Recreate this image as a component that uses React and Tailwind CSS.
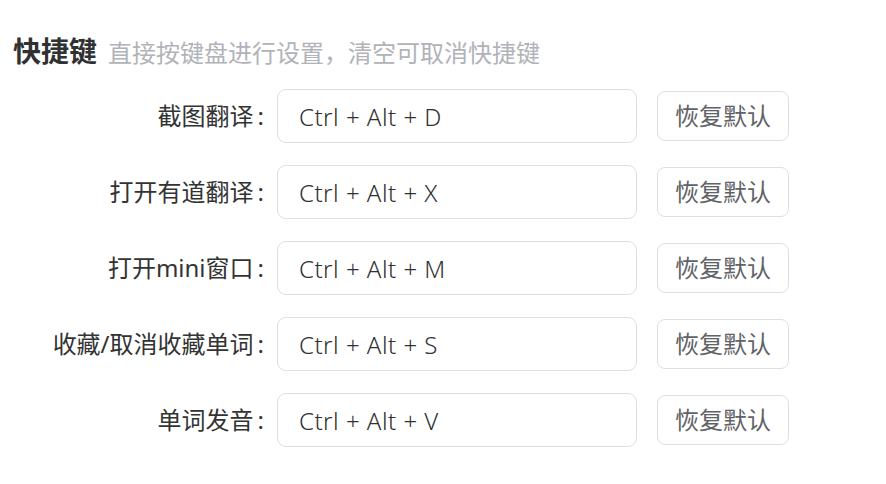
const FONT = "font-['Noto_Sans','Noto_Sans_CJK_SC',sans-serif]";

const shortcuts = [
  { label: '截图翻译', keys: 'Ctrl + Alt + D' },
  { label: '打开有道翻译', keys: 'Ctrl + Alt + X' },
  { label: '打开mini窗口', keys: 'Ctrl + Alt + M' },
  { label: '收藏/取消收藏单词', keys: 'Ctrl + Alt + S' },
  { label: '单词发音', keys: 'Ctrl + Alt + V' },
];

function ShortcutRow({ label, keys }) {
  return (
    <div className="flex items-center">
      <div className="w-[264px] shrink-0 text-right text-[24px] leading-none text-[#333333]">
        {label}
        <span className="ml-[4px]">:</span>
      </div>
      <input
        readOnly
        value={keys}
        className="ml-[13px] h-[54px] w-[360px] rounded-[9px] border border-[#dcdfe6] bg-white px-[21px] text-[24px] font-light tracking-[0.5px] text-[#303133] outline-none"
      />
      <button
        type="button"
        className="ml-[20px] h-[50px] w-[132px] rounded-[8px] border border-[#dcdfe6] bg-white text-[24px] text-[#606266]"
      >
        恢复默认
      </button>
    </div>
  );
}

export default function App() {
  return (
    <div className={`h-[484px] w-[886px] bg-white ${FONT}`}>
      <div className="flex items-baseline px-[13px] pt-[35px]">
        <h2 className="text-[28px] font-bold leading-[32px] text-[#303133]">快捷键</h2>
        <span className="ml-[11px] text-[24px] leading-[32px] text-[#b1b3b8]">
          直接按键盘进行设置，清空可取消快捷键
        </span>
      </div>
      <div className="mt-[20px] flex flex-col gap-[22px]">
        {shortcuts.map((s) => (
          <ShortcutRow key={s.label} label={s.label} keys={s.keys} />
        ))}
      </div>
    </div>
  );
}
